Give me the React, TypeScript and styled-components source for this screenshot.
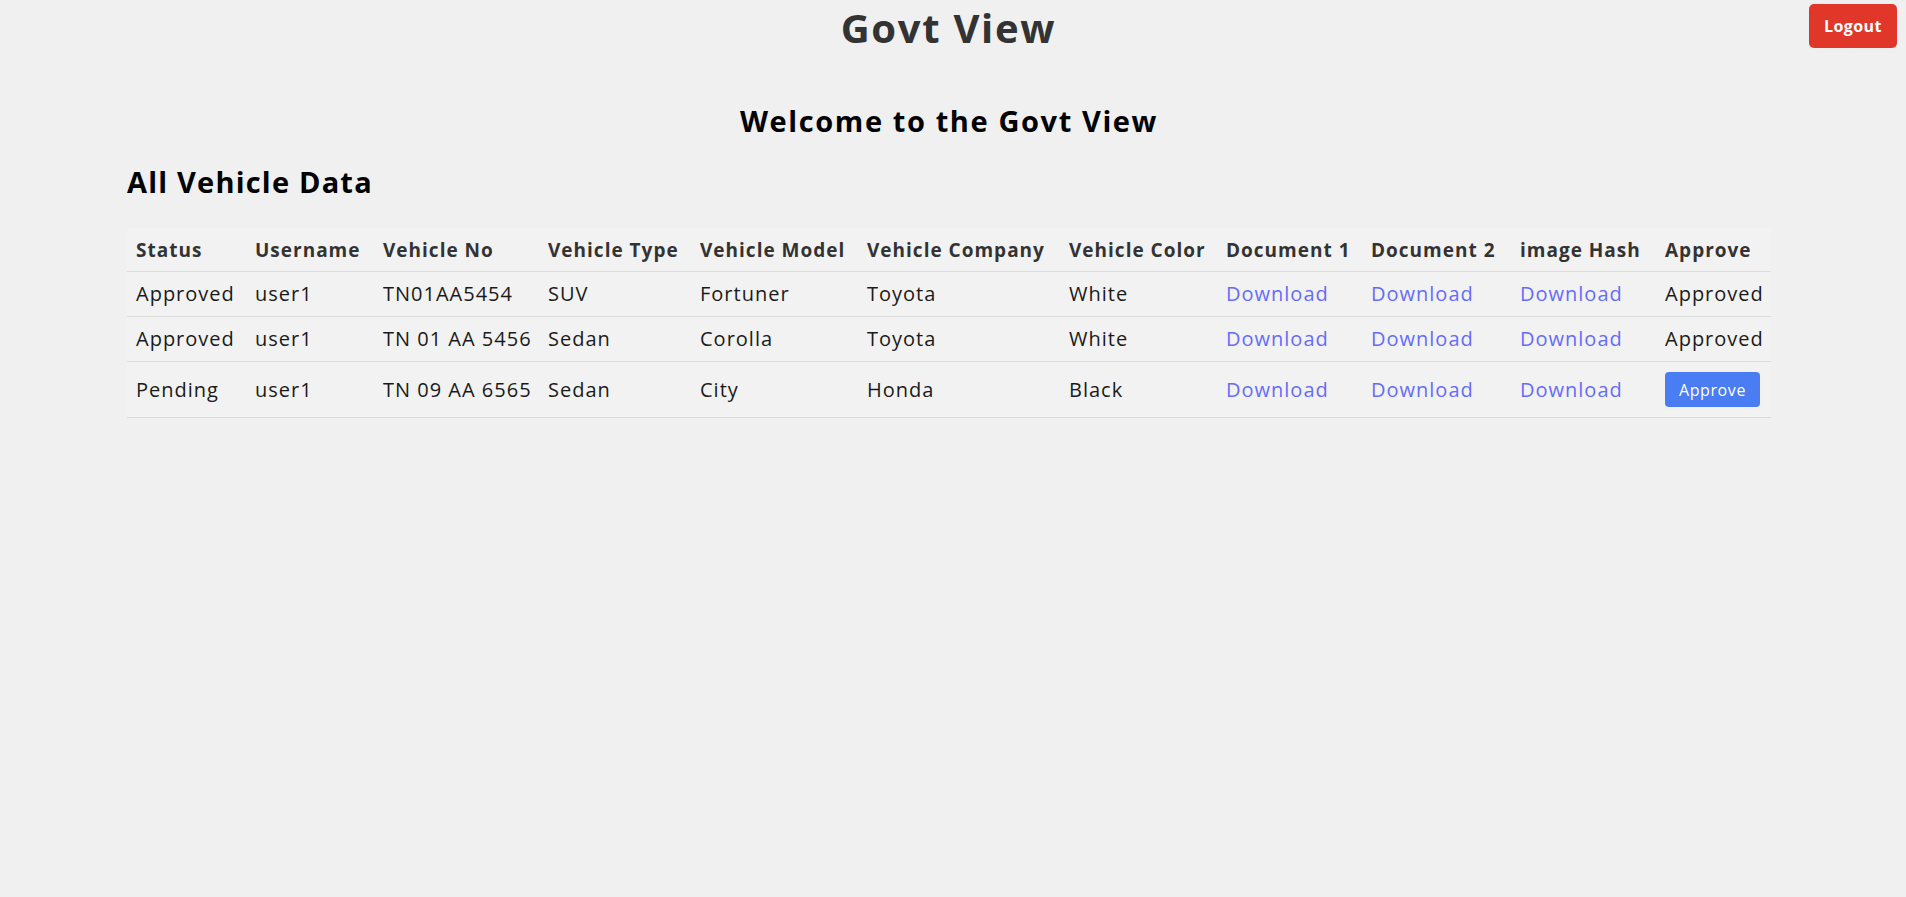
import React from 'react';
import styled, { createGlobalStyle } from 'styled-components';

const GlobalStyle = createGlobalStyle`
  body {
    margin: 0;
    background: #f0f0f0;
    font-family: 'Open Sans', 'Liberation Sans', sans-serif;
    color: #1a1a1a;
  }
`;

const Header = styled.header`
  display: grid;
  grid-template-columns: 1fr auto 1fr;
  align-items: start;
  padding: 4px 9px 0 0;
`;

const Title = styled.h1`
  grid-column: 2;
  margin: 0;
  font-size: 40px;
  line-height: 48px;
  font-weight: 700;
  letter-spacing: 1.7px;
  color: #333;
`;

const LogoutButton = styled.button`
  grid-column: 3;
  justify-self: end;
  width: 88px;
  height: 44px;
  border: none;
  border-radius: 5px;
  background: #e0372a;
  color: #fff;
  font-family: inherit;
  font-size: 16px;
  font-weight: 700;
  letter-spacing: 0.4px;
  cursor: pointer;
`;

const Main = styled.main`
  padding: 0 135px 40px 127px;
`;

const Welcome = styled.h2`
  margin: 51px 0 0;
  text-align: center;
  font-size: 29px;
  line-height: 36px;
  font-weight: 700;
  letter-spacing: 1.6px;
  color: #000;
`;

const SectionTitle = styled.h2`
  margin: 25px 0 28px;
  font-size: 29px;
  line-height: 36px;
  font-weight: 700;
  letter-spacing: 1.2px;
  color: #000;
`;

const Table = styled.table`
  width: 1644px;
  table-layout: fixed;
  border-collapse: collapse;
  background: #f2f2f2;
`;

const HeadCell = styled.th`
  padding: 10px 9px 9px;
  text-align: left;
  font-size: 19px;
  line-height: 24px;
  font-weight: 700;
  letter-spacing: 1px;
  color: #333;
  white-space: nowrap;
  border-bottom: 1px solid #dcdcdc;
`;

const Cell = styled.td`
  padding: 10px 9px;
  font-size: 20px;
  line-height: 24px;
  letter-spacing: 1px;
  color: #1a1a1a;
  white-space: nowrap;
  border-bottom: 1px solid #dcdcdc;
`;

const DownloadLink = styled.a`
  color: #646cff;
  text-decoration: none;
`;

const ApproveButton = styled.button`
  width: 95px;
  height: 35px;
  border: none;
  border-radius: 4px;
  background: #4a7cf4;
  color: #fff;
  font-family: inherit;
  font-size: 16px;
  letter-spacing: 0.6px;
  cursor: pointer;
`;

type Vehicle = {
  status: string;
  username: string;
  number: string;
  type: string;
  model: string;
  company: string;
  color: string;
};

const columns = [
  { label: 'Status', width: 119 },
  { label: 'Username', width: 128 },
  { label: 'Vehicle No', width: 165 },
  { label: 'Vehicle Type', width: 152 },
  { label: 'Vehicle Model', width: 167 },
  { label: 'Vehicle Company', width: 202 },
  { label: 'Vehicle Color', width: 157 },
  { label: 'Document 1', width: 145 },
  { label: 'Document 2', width: 149 },
  { label: 'image Hash', width: 145 },
  { label: 'Approve', width: 115 },
];

const vehicles: Vehicle[] = [
  { status: 'Approved', username: 'user1', number: 'TN01AA5454', type: 'SUV', model: 'Fortuner', company: 'Toyota', color: 'White' },
  { status: 'Approved', username: 'user1', number: 'TN 01 AA 5456', type: 'Sedan', model: 'Corolla', company: 'Toyota', color: 'White' },
  { status: 'Pending', username: 'user1', number: 'TN 09 AA 6565', type: 'Sedan', model: 'City', company: 'Honda', color: 'Black' },
];

export default function App() {
  return (
    <>
      <GlobalStyle />
      <Header>
        <Title>Govt View</Title>
        <LogoutButton>Logout</LogoutButton>
      </Header>
      <Main>
        <Welcome>Welcome to the Govt View</Welcome>
        <SectionTitle>All Vehicle Data</SectionTitle>
        <Table>
          <colgroup>
            {columns.map((c) => (
              <col key={c.label} style={{ width: c.width }} />
            ))}
          </colgroup>
          <thead>
            <tr>
              {columns.map((c) => (
                <HeadCell key={c.label}>{c.label}</HeadCell>
              ))}
            </tr>
          </thead>
          <tbody>
            {vehicles.map((v) => (
              <tr key={v.number}>
                <Cell>{v.status}</Cell>
                <Cell>{v.username}</Cell>
                <Cell>{v.number}</Cell>
                <Cell>{v.type}</Cell>
                <Cell>{v.model}</Cell>
                <Cell>{v.company}</Cell>
                <Cell>{v.color}</Cell>
                <Cell><DownloadLink href="#">Download</DownloadLink></Cell>
                <Cell><DownloadLink href="#">Download</DownloadLink></Cell>
                <Cell><DownloadLink href="#">Download</DownloadLink></Cell>
                <Cell>
                  {v.status === 'Approved' ? 'Approved' : <ApproveButton>Approve</ApproveButton>}
                </Cell>
              </tr>
            ))}
          </tbody>
        </Table>
      </Main>
    </>
  );
}
